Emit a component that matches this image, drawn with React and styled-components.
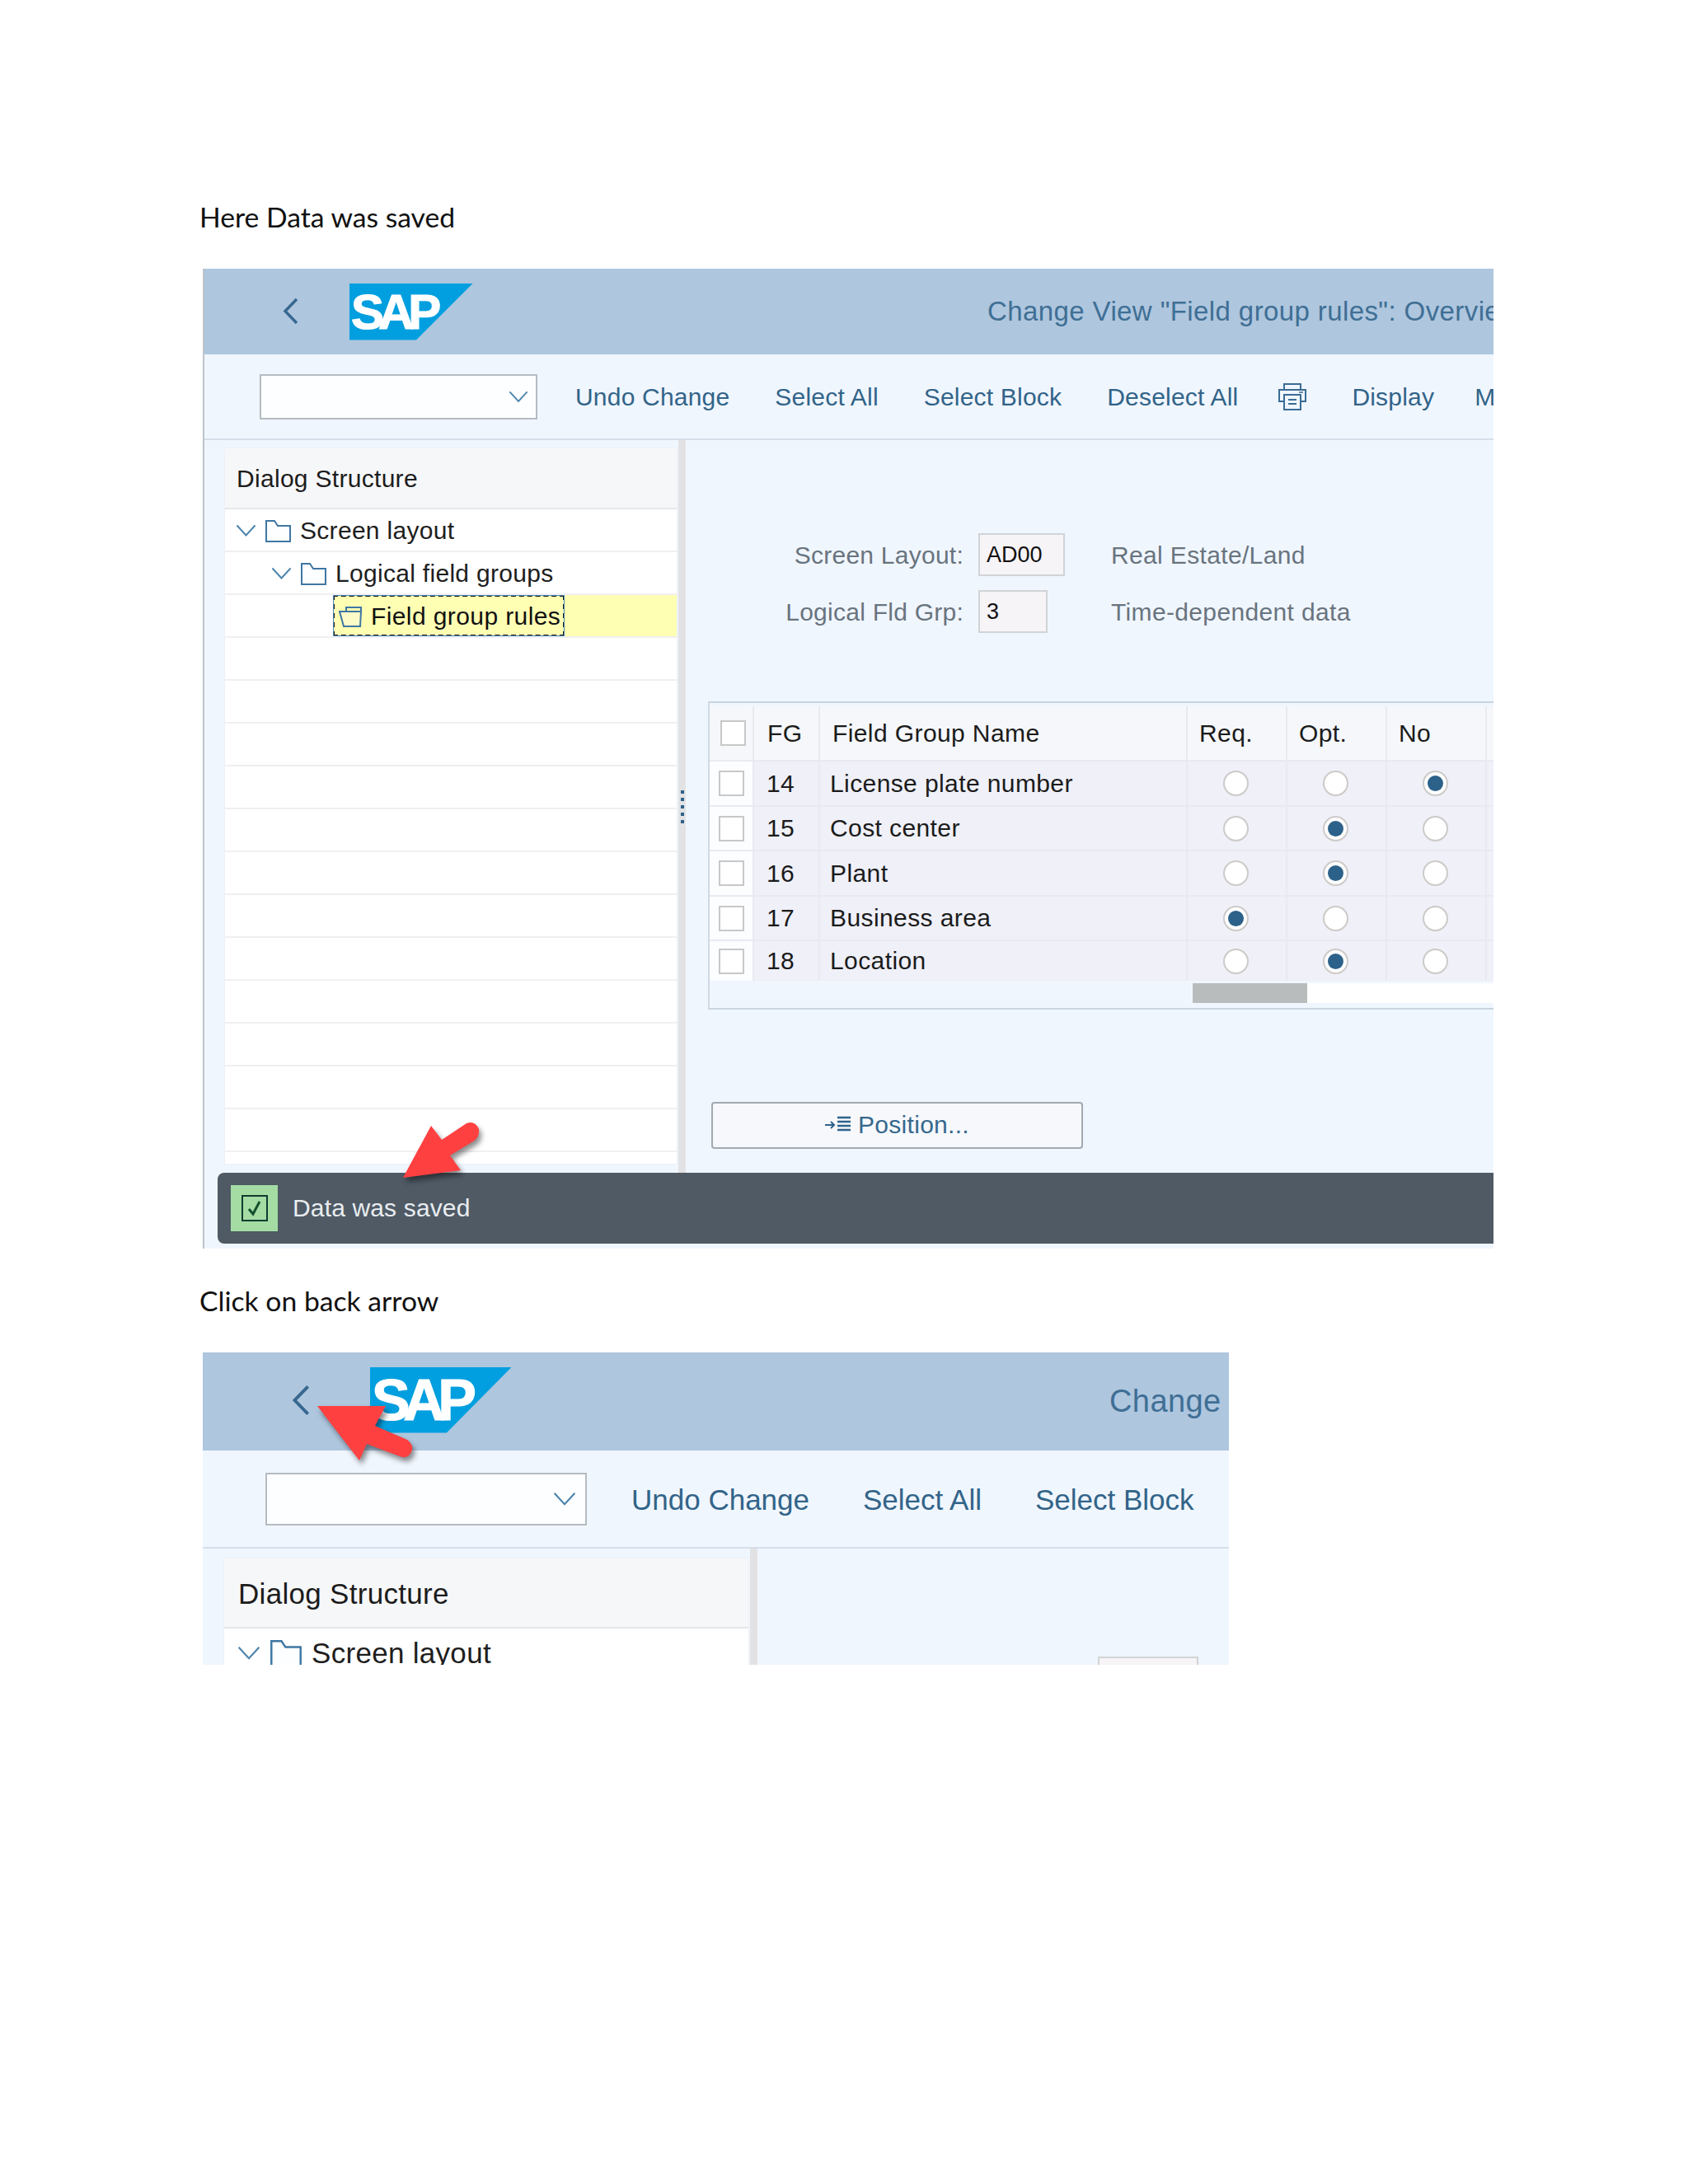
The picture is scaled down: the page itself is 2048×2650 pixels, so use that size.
import React from "react";
import styled, { createGlobalStyle } from "styled-components";

const GlobalStyle = createGlobalStyle`
    html, body {
        margin: 0;
        padding: 0;
        background: #fff;
    }
`;

const sz = (small, big) => (p) => (p.$big ? big : small);

const Page = styled.div`
    width: 2048px;
    min-height: 2650px;
    box-sizing: border-box;
    padding: 243px 0 0 246px;
    font-family: "Liberation Sans", Arial, sans-serif;
`;

const Note = styled.p`
    margin: ${(p) => p.$top || 0}px 0 0 -4px;
    height: 83px;
    font-family: Lato, "Open Sans", sans-serif;
    font-size: 33.7px;
    line-height: 40px;
    color: #111;
`;

const Screen = styled.section`
    position: relative;
    width: ${sz("1566px", "1245px")};
    height: ${sz("1189px", "379px")};
    overflow: hidden;
    box-sizing: border-box;
    display: flex;
    flex-direction: column;
    background: #f0f6fe;
    border-left: ${sz("2px solid #bcc3ca", "0")};
`;

const Header = styled.header`
    flex: none;
    height: ${sz("104px", "119px")};
    display: flex;
    align-items: center;
    padding-left: ${sz("95px", "108px")};
    background: #aec6de;
    box-sizing: border-box;
`;

const BackIcon = styled.svg`
    flex: none;
    width: ${sz("19px", "22px")};
    height: ${sz("33px", "38px")};
    margin-top: ${sz("-2px", "-4px")};
`;

const Logo = styled.div`
    flex: none;
    width: ${sz("150px", "172px")};
    height: ${sz("69px", "80px")};
    margin-left: ${sz("62px", "73px")};
    margin-top: ${sz("0", "-4px")};
    display: flex;
    align-items: center;
    padding-left: 2px;
    box-sizing: border-box;
    background: #019fdf;
    clip-path: polygon(0 0, 100% 0, 54% 100%, 0 100%);
    color: #fff;
    font-weight: 700;
    font-size: ${sz("60px", "70px")};
    letter-spacing: ${sz("-7px", "-8.5px")};
    -webkit-text-stroke: 1.2px #fff;
`;

const Title = styled.div`
    flex: none;
    margin-left: ${sz("624px", "725px")};
    white-space: nowrap;
    font-size: ${sz("33px", "38px")};
    letter-spacing: 0.4px;
    color: #3f6f95;
`;

const Toolbar = styled.nav`
    flex: none;
    height: ${sz("104px", "119px")};
    display: flex;
    align-items: center;
    gap: ${sz("55px", "65px")};
    padding-left: ${sz("67px", "76px")};
    box-sizing: border-box;
    border-bottom: 2px solid #d6dfe9;
`;

const Select = styled.div`
    flex: none;
    width: ${sz("337px", "390px")};
    height: ${sz("55px", "64px")};
    margin-right: ${sz("-9px", "-11px")};
    box-sizing: border-box;
    display: flex;
    align-items: center;
    justify-content: flex-end;
    padding-right: ${sz("9px", "11px")};
    background: #fdfeff;
    border: 2px solid #b5bcc1;
`;

const Chevron = styled.svg`
    flex: none;
    width: ${(p) => p.$w}px;
    height: ${(p) => p.$w * 0.62}px;
`;

const NavItem = styled.span`
    flex: none;
    padding-top: 2px;
    margin-left: ${(p) => p.$shift || 0}px;
    white-space: nowrap;
    font-size: ${sz("30px", "35px")};
    letter-spacing: ${sz("0.2px", "0")};
    color: #326489;
`;

const PrinterIcon = styled.svg`
    flex: none;
    width: 34px;
    height: 34px;
    margin-left: -6px;
`;

const Body = styled.div`
    flex: 1;
    min-height: 0;
    display: flex;
`;

const LeftPane = styled.div`
    flex: none;
    width: ${sz("548px", "636px")};
    margin: ${sz("10px 0 11px 25px", "12px 0 0 26px")};
    background: #fff;
    box-shadow: 0 0 2px #e4e6ea;
`;

const PaneHead = styled.div`
    height: ${sz("74px", "85px")};
    display: flex;
    align-items: center;
    padding: 2px 0 0 ${sz("14px", "17px")};
    box-sizing: border-box;
    background: #f6f7f9;
    border-bottom: 2px solid #e6e7e9;
    font-size: ${sz("30px", "35px")};
    letter-spacing: 0.3px;
    color: #1c1c1c;
`;

const TreeRow = styled.div`
    height: ${sz("52px", "60px")};
    box-sizing: border-box;
    display: flex;
    align-items: center;
    gap: ${sz("11px", "12px")};
    padding: ${(p) => (p.$flush ? 0 : 2)}px 0 0 ${(p) => p.$indent}px;
    border-bottom: 2px solid #f1eff2;
    font-size: ${sz("30px", "35px")};
    letter-spacing: 0.3px;
    color: #1e1e1e;
    white-space: nowrap;
`;

const FolderIcon = styled.svg`
    flex: none;
    width: ${sz("31px", "38px")};
    height: ${sz("27px", "33px")};
`;

const Highlight = styled.div`
    flex: 1;
    align-self: stretch;
    background: #ffffb4;
`;

const SelectedNode = styled.div`
    width: 281px;
    height: 100%;
    box-sizing: border-box;
    display: flex;
    align-items: center;
    gap: 9px;
    padding: 2px 0 0 5px;
    border: 2px dashed #1b1b1b;
    outline: 1px solid #4a88b8;
    outline-offset: -1px;
    font-size: 30px;
    letter-spacing: 0.4px;
    color: #111;
`;

const NodeIcon = styled.svg`
    flex: none;
    width: 30px;
    height: 26px;
`;

const Splitter = styled.div`
    flex: none;
    width: 9px;
    margin-left: 2px;
    display: flex;
    flex-direction: column;
    align-items: center;
    justify-content: center;
    gap: 5px;
    background: #e2e2e4;
`;

const GripDot = styled.i`
    display: block;
    width: 4px;
    height: 4px;
    background: #2f6289;
`;

const RightPane = styled.div`
    flex: 1;
    min-width: 0;
    padding: ${sz("113px 0 0", "131px 0 0 413px")};
`;

const Form = styled.div`
    display: grid;
    grid-template-columns: 337px 105px 1fr;
    column-gap: 18px;
    row-gap: 17px;
    align-items: center;
`;

const Label = styled.span`
    justify-self: end;
    padding-top: 2px;
    font-size: 30px;
    letter-spacing: 0.25px;
    color: #69747e;
    white-space: nowrap;
`;

const FieldBox = styled.div`
    width: ${(p) => p.$w}px;
    height: ${(p) => p.$h}px;
    box-sizing: border-box;
    padding-left: 8px;
    display: flex;
    align-items: center;
    background: #f7f4f7;
    border: 2px solid #d0d4d7;
    font-size: 27px;
    color: #111;
`;

const Description = styled.span`
    margin-left: 38px;
    padding-top: 2px;
    font-size: 30px;
    letter-spacing: 0.35px;
    color: #69747e;
    white-space: nowrap;
`;

const Table = styled.div`
    width: 1000px;
    margin: 83px 0 0 27px;
    padding-top: 4px;
    box-sizing: border-box;
    border-top: 2px solid #c8d4df;
    border-left: 2px solid #d0d9e2;
    border-bottom: 2px solid #c8d4df;
`;

const TableRow = styled.div`
    display: grid;
    grid-template-columns: 54px 80px 446px 121px 121px 121px 1fr;
    height: ${(p) => p.$h}px;
    font-size: 30px;
    letter-spacing: 0.4px;
    color: #1b1b1b;
`;

const Cell = styled.div`
    display: flex;
    align-items: center;
    padding: 0 ${(p) => (p.$center ? 2 : 0)}px 0 ${(p) => p.$pad || 0}px;
    justify-content: ${(p) => (p.$center ? "center" : "flex-start")};
    box-sizing: border-box;
    white-space: nowrap;
    background: ${(p) => (p.$head ? "#f5f7fa" : "#eff0f8")};
    border-right: 2px solid #e9eaf1;
    border-bottom: ${(p) => (p.$last ? "0" : "2px solid #e9eaf1")};
`;

const SelectorCell = styled(Cell)`
    padding-left: ${(p) => (p.$head ? 13 : 11)}px;
    background: ${(p) => (p.$head ? "#f5f7fa" : "#fbfdff")};
`;

const CheckBox = styled.div`
    width: 31px;
    height: 31px;
    box-sizing: border-box;
    background: #fff;
    border: 2px solid #c8c8c8;
`;

const Radio = styled.div`
    position: relative;
    width: 31px;
    height: 31px;
    box-sizing: border-box;
    border-radius: 50%;
    background: #fff;
    border: 2px solid #cdcac8;

    &::after {
        content: "";
        display: ${(p) => (p.$on ? "block" : "none")};
        position: absolute;
        inset: 4px;
        border-radius: 50%;
        background: #2c6189;
    }
`;

const ScrollRow = styled.div`
    height: 33px;
    box-sizing: border-box;
    padding: 3px 0 6px 586px;
    display: flex;
`;

const ScrollThumb = styled.div`
    flex: none;
    width: 139px;
    background: #b9bcbd;
`;

const ScrollTrack = styled.div`
    flex: 1;
    background: #fff;
`;

const PositionButton = styled.button`
    display: flex;
    align-items: center;
    justify-content: center;
    gap: 8px;
    width: 451px;
    height: 57px;
    margin: 112px 0 0 31px;
    padding: 0 0 2px;
    background: #f6f8fb;
    border: 2px solid #a2a9af;
    border-radius: 4px;
    font-family: inherit;
    font-size: 30px;
    letter-spacing: 0.3px;
    color: #36688e;
`;

const PositionIcon = styled.svg`
    flex: none;
    width: 32px;
    height: 22px;
`;

const StatusBar = styled.div`
    flex: none;
    height: 86px;
    margin: 0 0 6px 16px;
    display: flex;
    align-items: center;
    gap: 18px;
    padding-left: 16px;
    background: #4f5a65;
    border-radius: 8px 0 0 8px;
    font-size: 30px;
    letter-spacing: 0.15px;
    color: #e9edf0;
`;

const StatusIcon = styled.div`
    width: 57px;
    height: 56px;
    display: flex;
    align-items: center;
    justify-content: center;
    background: #a4dca4;
`;

const CheckMark = styled.div`
    width: 32px;
    height: 32px;
    box-sizing: border-box;
    border: 2px solid #123c30;
    display: flex;
    align-items: center;
    justify-content: center;
`;

const RedArrow = styled.svg`
    position: absolute;
    left: ${(p) => p.$x}px;
    top: ${(p) => p.$y}px;
    overflow: visible;
    filter: drop-shadow(3px 5px 3px rgba(0, 0, 0, 0.45));
`;

const Back = ({ $big }) => (
    <BackIcon $big={$big} viewBox="0 0 19 33" fill="none">
        <path d="M17 2 3 16.5 17 31" stroke="#38678f" strokeWidth="3.4" />
    </BackIcon>
);

const Down = ({ w }) => (
    <Chevron $w={w} viewBox="0 0 26 16" fill="none">
        <path d="M1.5 1.5 13 14 24.5 1.5" stroke="#4b84ad" strokeWidth="2" />
    </Chevron>
);

const Folder = ({ $big }) => (
    <FolderIcon $big={$big} viewBox="0 0 31 27" fill="#fdfeff">
        <path d="M1 26V1h10l4 6h15v19z" stroke="#3f77a3" strokeWidth="2" />
    </FolderIcon>
);

const Printer = () => (
    <PrinterIcon viewBox="0 0 34 34" fill="none" stroke="#3a6c95" strokeWidth="2">
        <path d="M7 9V2h20v7" />
        <path d="M7 23H1V9h32v14h-6" />
        <path d="M7 15h20v18H7z" fill="#f0f6fe" />
        <path d="M12 21h10M12 26h10" />
        <path d="M25 12h5" stroke="#6d8ba5" />
    </PrinterIcon>
);

const rows = [
    { fg: 14, name: "License plate number", on: 2, h: 55 },
    { fg: 15, name: "Cost center", on: 1, h: 54 },
    { fg: 16, name: "Plant", on: 1, h: 55 },
    { fg: 17, name: "Business area", on: 0, h: 54 },
    { fg: 18, name: "Location", on: 1, h: 48, last: true },
];

const Grid = () => (
    <Table>
        <TableRow $h={67}>
            <SelectorCell $head><CheckBox /></SelectorCell>
            <Cell $head $pad={16}>FG</Cell>
            <Cell $head $pad={15}>Field Group Name</Cell>
            <Cell $head $pad={14}>Req.</Cell>
            <Cell $head $pad={14}>Opt.</Cell>
            <Cell $head $pad={14}>No</Cell>
            <Cell $head />
        </TableRow>
        {rows.map((row) => (
            <TableRow key={row.fg} $h={row.h}>
                <SelectorCell $last={row.last}><CheckBox /></SelectorCell>
                <Cell $pad={15} $last={row.last}>{row.fg}</Cell>
                <Cell $pad={12} $last={row.last}>{row.name}</Cell>
                {[0, 1, 2].map((i) => (
                    <Cell key={i} $center $last={row.last}><Radio $on={row.on === i} /></Cell>
                ))}
                <Cell $last={row.last} />
            </TableRow>
        ))}
        <ScrollRow>
            <ScrollThumb />
            <ScrollTrack />
        </ScrollRow>
    </Table>
);

const ToolbarItems = ({ $big }) => (
    <>
        <NavItem $big={$big}>Undo Change</NavItem>
        <NavItem $big={$big}>Select All</NavItem>
        <NavItem $big={$big}>Select Block</NavItem>
    </>
);

export default function App() {
    return (
        <Page>
            <GlobalStyle />
            <Note>Here Data was saved</Note>

            <Screen>
                <Header>
                    <Back />
                    <Logo>SAP</Logo>
                    <Title>Change View "Field group rules": Overview</Title>
                </Header>
                <Toolbar>
                    <Select><Down w={24} /></Select>
                    <ToolbarItems />
                    <NavItem>Deselect All</NavItem>
                    <Printer />
                    <NavItem>Display</NavItem>
                    <NavItem $shift={-6}>More</NavItem>
                </Toolbar>
                <Body>
                    <LeftPane>
                        <PaneHead>Dialog Structure</PaneHead>
                        <TreeRow $indent={13}><Down w={25} /><Folder />Screen layout</TreeRow>
                        <TreeRow $indent={56}><Down w={25} /><Folder />Logical field groups</TreeRow>
                        <TreeRow $flush $indent={131}>
                            <Highlight>
                                <SelectedNode>
                                    <NodeIcon viewBox="0 0 30 26" fill="none" stroke="#3f77a3" strokeWidth="2">
                                        <path d="M9 7V2h18v5" />
                                        <path d="M1 7h26l-1 18H6z" fill="#fdfbc8" />
                                    </NodeIcon>
                                    Field group rules
                                </SelectedNode>
                            </Highlight>
                        </TreeRow>
                        {Array.from({ length: 12 }, (_, i) => <TreeRow key={i} $indent={0} />)}
                    </LeftPane>
                    <Splitter>
                        {[0, 1, 2, 3, 4].map((i) => <GripDot key={i} />)}
                    </Splitter>
                    <RightPane>
                        <Form>
                            <Label>Screen Layout:</Label>
                            <FieldBox $w={105} $h={52}>AD00</FieldBox>
                            <Description>Real Estate/Land</Description>
                            <Label>Logical Fld Grp:</Label>
                            <FieldBox $w={84} $h={52}>3</FieldBox>
                            <Description>Time-dependent data</Description>
                        </Form>
                        <Grid />
                        <PositionButton>
                            <PositionIcon viewBox="0 0 32 22" fill="none" stroke="#2f6289">
                                <path d="M0 11h11M7 7l4 4-4 4" strokeWidth="2" />
                                <path d="M15 2h16M15 7h16M15 12h16M15 17h16" strokeWidth="2.4" />
                            </PositionIcon>
                            Position...
                        </PositionButton>
                    </RightPane>
                </Body>
                <StatusBar>
                    <StatusIcon>
                        <CheckMark>
                            <svg width="20" height="20" viewBox="0 0 20 20" fill="none">
                                <path d="M3 11l5 6L16 2" stroke="#14502c" strokeWidth="3" />
                            </svg>
                        </CheckMark>
                    </StatusIcon>
                    Data was saved
                </StatusBar>
                <RedArrow $x={228} $y={1030} width="120" height="80" viewBox="0 0 120 80">
                    <path d="M13 73 47 10 60 27 90 7Q100 3 105 14 106 24 98 29L70 46 83 64z" fill="#ff4040" />
                </RedArrow>
            </Screen>

            <Note $top={43}>Click on back arrow</Note>

            <Screen $big>
                <Header $big>
                    <Back $big />
                    <Logo $big>SAP</Logo>
                    <Title $big>Change View</Title>
                </Header>
                <Toolbar $big>
                    <Select $big><Down w={28} /></Select>
                    <ToolbarItems $big />
                </Toolbar>
                <Body>
                    <LeftPane $big>
                        <PaneHead $big>Dialog Structure</PaneHead>
                        <TreeRow $big $indent={16}><Down w={28} /><Folder $big />Screen layout</TreeRow>
                    </LeftPane>
                    <Splitter />
                    <RightPane $big>
                        <FieldBox $w={122} $h={60} />
                    </RightPane>
                </Body>
                <RedArrow $x={129} $y={55} width="130" height="80" viewBox="0 0 130 80">
                    <path d="M10 10H93L80 34 119 51Q128 58 124 66 119 75 110 71L70 56 61 76z" fill="#ff4040" />
                </RedArrow>
            </Screen>
        </Page>
    );
}
